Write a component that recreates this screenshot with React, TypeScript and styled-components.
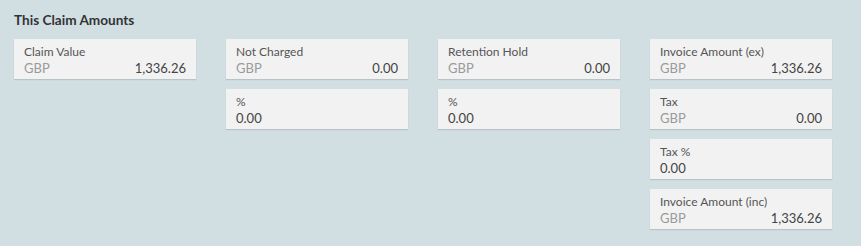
import styled, { createGlobalStyle } from "styled-components";

const GlobalStyle = createGlobalStyle`
  html, body {
    margin: 0;
    padding: 0;
    background: #d1dfe3;
  }
  body {
    font-family: "Lato", "Liberation Sans", sans-serif;
  }
`;

type Field = {
  label: string;
  value: string;
  currency?: string;
};

const columns: Field[][] = [
  [{ label: "Claim Value", currency: "GBP", value: "1,336.26" }],
  [
    { label: "Not Charged", currency: "GBP", value: "0.00" },
    { label: "%", value: "0.00" },
  ],
  [
    { label: "Retention Hold", currency: "GBP", value: "0.00" },
    { label: "%", value: "0.00" },
  ],
  [
    { label: "Invoice Amount (ex)", currency: "GBP", value: "1,336.26" },
    { label: "Tax", currency: "GBP", value: "0.00" },
    { label: "Tax %", value: "0.00" },
    { label: "Invoice Amount (inc)", currency: "GBP", value: "1,336.26" },
  ],
];

function AmountCard({ label, value, currency }: Field) {
  return (
    <Card>
      <Label>{label}</Label>
      <ValueRow>
        {currency && <Currency>{currency}</Currency>}
        <Value $alignRight={!!currency}>{value}</Value>
      </ValueRow>
    </Card>
  );
}

export default function App() {
  return (
    <>
      <GlobalStyle />
      <Panel>
        <Title>This Claim Amounts</Title>
        <Grid>
          {columns.map((col, i) => (
            <Column key={i}>
              {col.map((f, j) => (
                <AmountCard key={j} {...f} />
              ))}
            </Column>
          ))}
        </Grid>
      </Panel>
    </>
  );
}

const Panel = styled.div`
  width: 861px;
  height: 246px;
  box-sizing: border-box;
  padding: 11px 29px 0 14px;
`;

const Title = styled.div`
  font-size: 13.6px;
  font-weight: 700;
  color: #333;
  line-height: 18px;
  margin-bottom: 10px;
`;

const Grid = styled.div`
  display: grid;
  grid-template-columns: repeat(4, 182px);
  column-gap: 30px;
  justify-content: space-between;
  align-items: start;
`;

const Column = styled.div`
  display: flex;
  flex-direction: column;
  gap: 10px;
`;

const Card = styled.div`
  height: 40px;
  box-sizing: border-box;
  background: #f2f2f2;
  box-shadow: 0 1px 1px rgba(0, 0, 0, 0.12);
  padding: 5px 10px 0 10px;
  display: flex;
  flex-direction: column;
`;

const Label = styled.div`
  font-size: 12px;
  line-height: 15px;
  color: #555;
`;

const ValueRow = styled.div`
  display: flex;
  align-items: baseline;
  font-size: 13px;
  line-height: 18px;
`;

const Currency = styled.span`
  color: #9a9a9a;
`;

const Value = styled.span<{ $alignRight: boolean }>`
  color: #444;
  margin-left: ${({ $alignRight }) => ($alignRight ? "auto" : "0")};
`;
